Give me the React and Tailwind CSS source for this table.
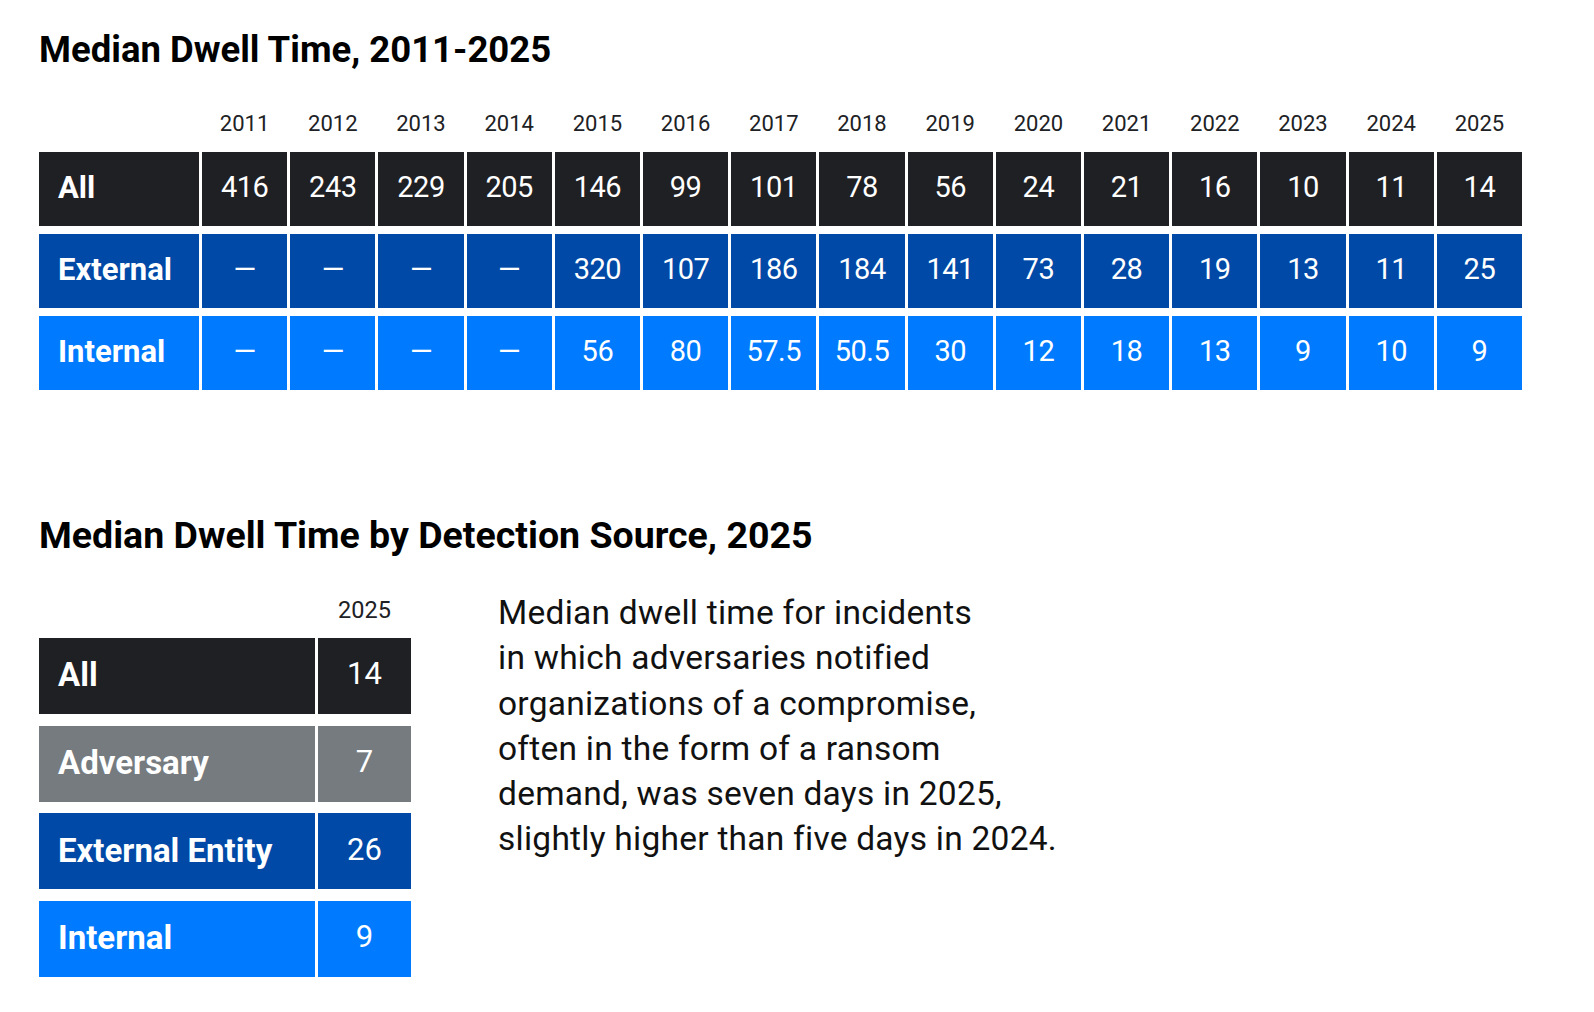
import React from "react";

const years = [2011, 2012, 2013, 2014, 2015, 2016, 2017, 2018, 2019, 2020, 2021, 2022, 2023, 2024, 2025];

const rows = [
  { label: "All", bg: "bg-[#1f2023]", vals: ["416", "243", "229", "205", "146", "99", "101", "78", "56", "24", "21", "16", "10", "11", "14"] },
  { label: "External", bg: "bg-[#0049a6]", vals: ["—", "—", "—", "—", "320", "107", "186", "184", "141", "73", "28", "19", "13", "11", "25"] },
  { label: "Internal", bg: "bg-[#007bff]", vals: ["—", "—", "—", "—", "56", "80", "57.5", "50.5", "30", "12", "18", "13", "9", "10", "9"] },
];

const rows2 = [
  { label: "All", bg: "bg-[#1f2023]", val: "14" },
  { label: "Adversary", bg: "bg-[#757b7f]", val: "7" },
  { label: "External Entity", bg: "bg-[#0049a6]", val: "26" },
  { label: "Internal", bg: "bg-[#007bff]", val: "9" },
];

const gridCols = "grid grid-cols-[160px_repeat(15,minmax(0,1fr))] gap-x-[3px] w-[1483px]";

export default function App() {
  return (
    <div className="min-h-[1012px] w-[1594px] bg-white pl-[39px] pt-[28px] font-['Roboto',sans-serif] text-[#111]">
      <h1 className="text-[36.5px] font-bold leading-[44px] text-black">Median Dwell Time, 2011-2025</h1>

      <div className={`${gridCols} mt-[38px] h-[28px] items-center`}>
        <div />
        {years.map((y) => (
          <div key={y} className="text-center text-[22px] leading-[28px] text-[#202124]">
            {y}
          </div>
        ))}
      </div>

      <div className="mt-[14px] flex flex-col gap-y-[8px]">
        {rows.map((r) => (
          <div key={r.label} className={`${gridCols} h-[74px]`}>
            <div className={`${r.bg} flex items-center pb-[2px] pl-[19px] text-[31px] font-bold text-white`}>{r.label}</div>
            {r.vals.map((v, i) => (
              <div key={i} className={`${r.bg} flex items-center justify-center pb-[3px] text-[29px] tracking-[-0.5px] text-white`}>
                {v}
              </div>
            ))}
          </div>
        ))}
      </div>

      <h2 className="mt-[123px] text-[37.5px] font-bold leading-[44px] text-black">
        Median Dwell Time by Detection Source, 2025
      </h2>

      <div className="mt-[33px] flex items-start">
        <div className="w-[373px] pt-[6px]">
          <div className="grid grid-cols-[276px_93px] gap-x-[3px]">
            <div />
            <div className="text-center text-[23.5px] leading-[28px] text-[#202124]">2025</div>
          </div>
          <div className="mt-[14px] flex flex-col gap-y-[11.7px]">
            {rows2.map((r) => (
              <div key={r.label} className="grid h-[76px] grid-cols-[276px_93px] gap-x-[3px]">
                <div className={`${r.bg} flex items-center pb-[2px] pl-[19px] text-[33px] font-bold text-white`}>{r.label}</div>
                <div className={`${r.bg} flex items-center justify-center pb-[3px] text-[31px] text-white`}>{r.val}</div>
              </div>
            ))}
          </div>
        </div>
        <p className="ml-[86px] text-[33.5px] leading-[45.3px] tracking-[0.25px] text-[#111]">
          Median dwell time for incidents
          <br />
          in which adversaries notified
          <br />
          organizations of a compromise,
          <br />
          often in the form of a ransom
          <br />
          demand, was seven days in 2025,
          <br />
          slightly higher than five days in 2024.
        </p>
      </div>
    </div>
  );
}
